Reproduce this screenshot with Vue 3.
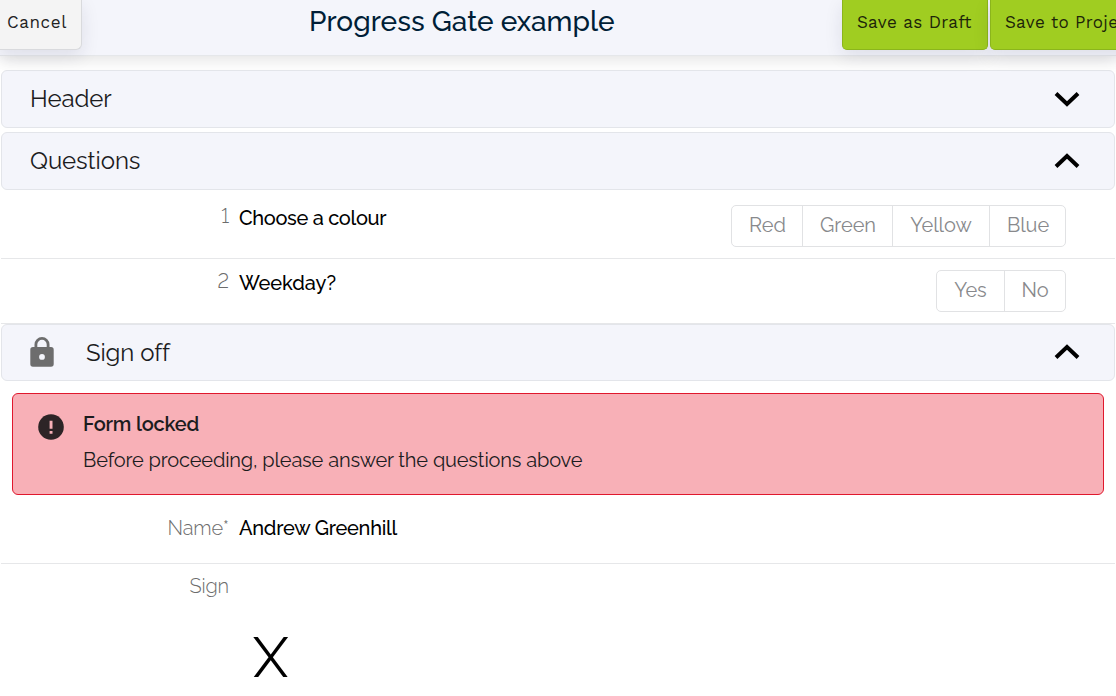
<template>
  <div class="page">
    <header class="topbar">
      <button class="btn btn-cancel">Cancel</button>
      <h1 class="title">Progress Gate example</h1>
      <div class="actions">
        <button class="btn btn-save">Save as Draft</button>
        <button class="btn btn-save btn-project">Save to Project</button>
      </div>
    </header>

    <main class="form">
      <section class="panel" @click="open.header = !open.header">
        <h2 class="panel-title t-header">Header</h2>
        <svg class="chevron" :class="{ up: open.header }" viewBox="0 0 26 16">
          <path d="M2 2.5 L13 13 L24 2.5" />
        </svg>
      </section>

      <section class="panel" @click="open.questions = !open.questions">
        <h2 class="panel-title t-questions">Questions</h2>
        <svg class="chevron" :class="{ up: open.questions }" viewBox="0 0 26 16">
          <path d="M2 2.5 L13 13 L24 2.5" />
        </svg>
      </section>

      <div v-if="open.questions" class="questions">
        <div v-for="(q, i) in questions" :key="q.text" class="row">
          <span class="label number">{{ i + 1 }}</span>
          <span class="value" :class="q.cls">{{ q.text }}</span>
          <div class="options">
            <button
              v-for="o in q.options"
              :key="o"
              class="option"
              :class="'opt-' + o.toLowerCase()"
            >
              {{ o }}
            </button>
          </div>
        </div>
      </div>

      <section class="panel panel-locked" @click="open.signoff = !open.signoff">
        <svg class="lock" viewBox="0 0 24 30">
          <path
            fill-rule="evenodd"
            d="M3 10H4.5V7.5a7.5 7.5 0 0 1 15 0V10H21a2.7 2.7 0 0 1 2.7 2.7V27A2.7 2.7 0 0 1 21 29.7H3A2.7 2.7 0 0 1 .3 27V12.7A2.7 2.7 0 0 1 3 10ZM7.3 10H16.7V7.5a4.7 4.7 0 0 0-9.4 0ZM12 17a2.9 2.9 0 1 0 0 5.8a2.9 2.9 0 0 0 0-5.8Z"
          />
        </svg>
        <h2 class="panel-title t-signoff">Sign off</h2>
        <svg class="chevron" :class="{ up: open.signoff }" viewBox="0 0 26 16">
          <path d="M2 2.5 L13 13 L24 2.5" />
        </svg>
      </section>

      <template v-if="open.signoff">
        <div class="alert">
          <svg class="alert-icon" viewBox="0 0 26 26">
            <circle cx="13" cy="13" r="12.8" />
            <path d="M11.6 6.7h2.9v8h-2.9zM11.6 17h2.9v2.7h-2.9z" />
          </svg>
          <div class="alert-body">
            <strong class="alert-title">Form locked</strong>
            <p class="alert-text">Before proceeding, please answer the questions above</p>
          </div>
        </div>

        <div class="row row-name">
          <span class="label">Name*</span>
          <span class="value v-name">Andrew Greenhill</span>
        </div>
        <div class="row row-sign">
          <span class="label">Sign</span>
          <div class="signature">X</div>
        </div>
      </template>
    </main>
  </div>
</template>

<script setup>
import { reactive } from "vue";

const open = reactive({ header: false, questions: true, signoff: true });

const questions = [
  {
    text: "Choose a colour",
    cls: "v-colour",
    options: ["Red", "Green", "Yellow", "Blue"],
  },
  { text: "Weekday?", cls: "v-weekday", options: ["Yes", "No"] },
];
</script>

<style>
body {
  margin: 0;
  background: #fff;
  overflow: hidden;
}
</style>

<style scoped>
.page {
  width: 100%;
  height: 696px;
  overflow: hidden;
  font-family: Raleway, Lato, sans-serif;
  font-variant-numeric: lining-nums;
  color: #1c1c1e;
}

.page * {
  box-sizing: border-box;
}

.topbar {
  display: grid;
  grid-template-columns: 82px 227px 1fr 274px;
  height: 56px;
  background: #f4f5fb;
  border-bottom: 1px solid #e5e7ea;
  box-shadow: 0 3px 16px rgba(0, 0, 0, 0.12);
}

.btn {
  height: 50px;
  padding: 0 0 5px;
  border: 1px solid #d9dadd;
  border-top: 0;
  font-family: "Work Sans", "Noto Sans", sans-serif;
  font-size: 17px;
  line-height: 42px;
  letter-spacing: 0.6px;
  white-space: nowrap;
  color: #222;
  box-shadow: 0 6px 18px rgba(30, 30, 70, 0.1);
}

.btn-cancel {
  padding-left: 7px;
  border-left: 0;
  border-radius: 0 0 6px 0;
  background: #f4f4f4;
  text-align: left;
}

.title {
  grid-column: 3;
  margin: 0;
  font-size: 28px;
  font-weight: 500;
  line-height: 44px;
  letter-spacing: 0.05px;
  white-space: nowrap;
  color: #001e37;
}

.actions {
  display: flex;
  gap: 2px;
}

.btn-save {
  flex: none;
  width: 146px;
  padding-left: 14px;
  border-color: #8bb51c;
  border-radius: 0 0 5px 5px;
  background: #a0cd21;
  color: #1d2509;
  letter-spacing: 0.35px;
  text-align: left;
}

.btn-project {
  width: 160px;
}

.form {
  padding: 14px 1px 0;
}

.panel {
  display: flex;
  align-items: center;
  height: 58px;
  margin-bottom: 4px;
  padding: 0 34px 0 28px;
  border: 1px solid #e3e5ea;
  border-radius: 6px;
  background: #f4f5fb;
}

.panel + .questions {
  margin-top: -4px;
}

.panel-title {
  flex: 1;
  margin: 0;
  font-size: 24px;
  font-weight: 400;
  line-height: 30px;
}

.t-header,
.t-questions {
  letter-spacing: -0.08px;
}

.t-signoff {
  letter-spacing: -0.1px;
}

.chevron {
  width: 26px;
  height: 16px;
}

.chevron path {
  fill: none;
  stroke: #000;
  stroke-width: 4;
}

.chevron.up {
  transform: rotate(180deg);
}

.row {
  display: flex;
  align-items: flex-start;
  height: 65px;
  padding: 11px 49px 0 0;
  border-bottom: 1px solid #e6e7e9;
  font-size: 20px;
  line-height: 26px;
}

.row:first-child {
  height: 69px;
  padding-top: 15px;
}

.label {
  width: 228px;
  margin-right: 10px;
  text-align: right;
  font-weight: 300;
  letter-spacing: -0.1px;
  color: #6c6c6c;
}

.number {
  margin-top: -2px;
}

.value {
  font-weight: 500;
  color: #000;
}

.v-colour {
  letter-spacing: -0.33px;
}

.v-weekday {
  letter-spacing: -0.05px;
}

.v-name {
  letter-spacing: -0.25px;
}

.options {
  display: flex;
  margin-left: auto;
  height: 42px;
  border: 1px solid #e1e2e4;
  border-radius: 5px;
}

.option {
  padding: 0 0 3px 1px;
  border: 0;
  border-left: 1px solid #e1e2e4;
  background: none;
  font: inherit;
  letter-spacing: -0.05px;
  color: #88898c;
}

.option:first-child {
  border-left: 0;
}

.opt-red {
  width: 70px;
}

.opt-green {
  width: 90px;
}

.opt-yellow {
  width: 97px;
  padding-left: 0;
}

.opt-blue {
  width: 76px;
}

.opt-yes {
  width: 67px;
  padding-left: 0;
}

.opt-no {
  width: 61px;
  padding-left: 0;
}

.panel-locked {
  height: 57px;
  margin-bottom: 12px;
}

.panel-locked .chevron {
  margin-top: -1px;
}

.lock {
  width: 24px;
  height: 30px;
  margin: -1px 32px 0 0;
  fill: #6d6d6d;
}

.alert {
  display: flex;
  height: 102px;
  margin: 0 11px;
  padding: 17px 25px;
  border: 1px solid #e0182d;
  border-radius: 6px;
  background: #f8b0b7;
}

.alert-icon {
  width: 26px;
  height: 26px;
  margin: 3px 19px 0 0;
}

.alert-icon circle {
  fill: #2d2426;
}

.alert-icon path {
  fill: #f8b0b7;
}

.alert-title {
  display: block;
  font-size: 20px;
  font-weight: 600;
  line-height: 26px;
  letter-spacing: -0.2px;
}

.alert-text {
  margin: 10px 0 0;
  font-size: 20px;
  line-height: 26px;
  letter-spacing: -0.16px;
}

.row-name {
  height: 69px;
  padding-top: 20px;
}

.row-sign {
  height: 132px;
  padding-top: 9px;
  border-bottom: 0;
}

.signature {
  margin: 50px 0 0 14px;
  font-size: 56px;
  line-height: 68px;
  color: #000;
}
</style>
